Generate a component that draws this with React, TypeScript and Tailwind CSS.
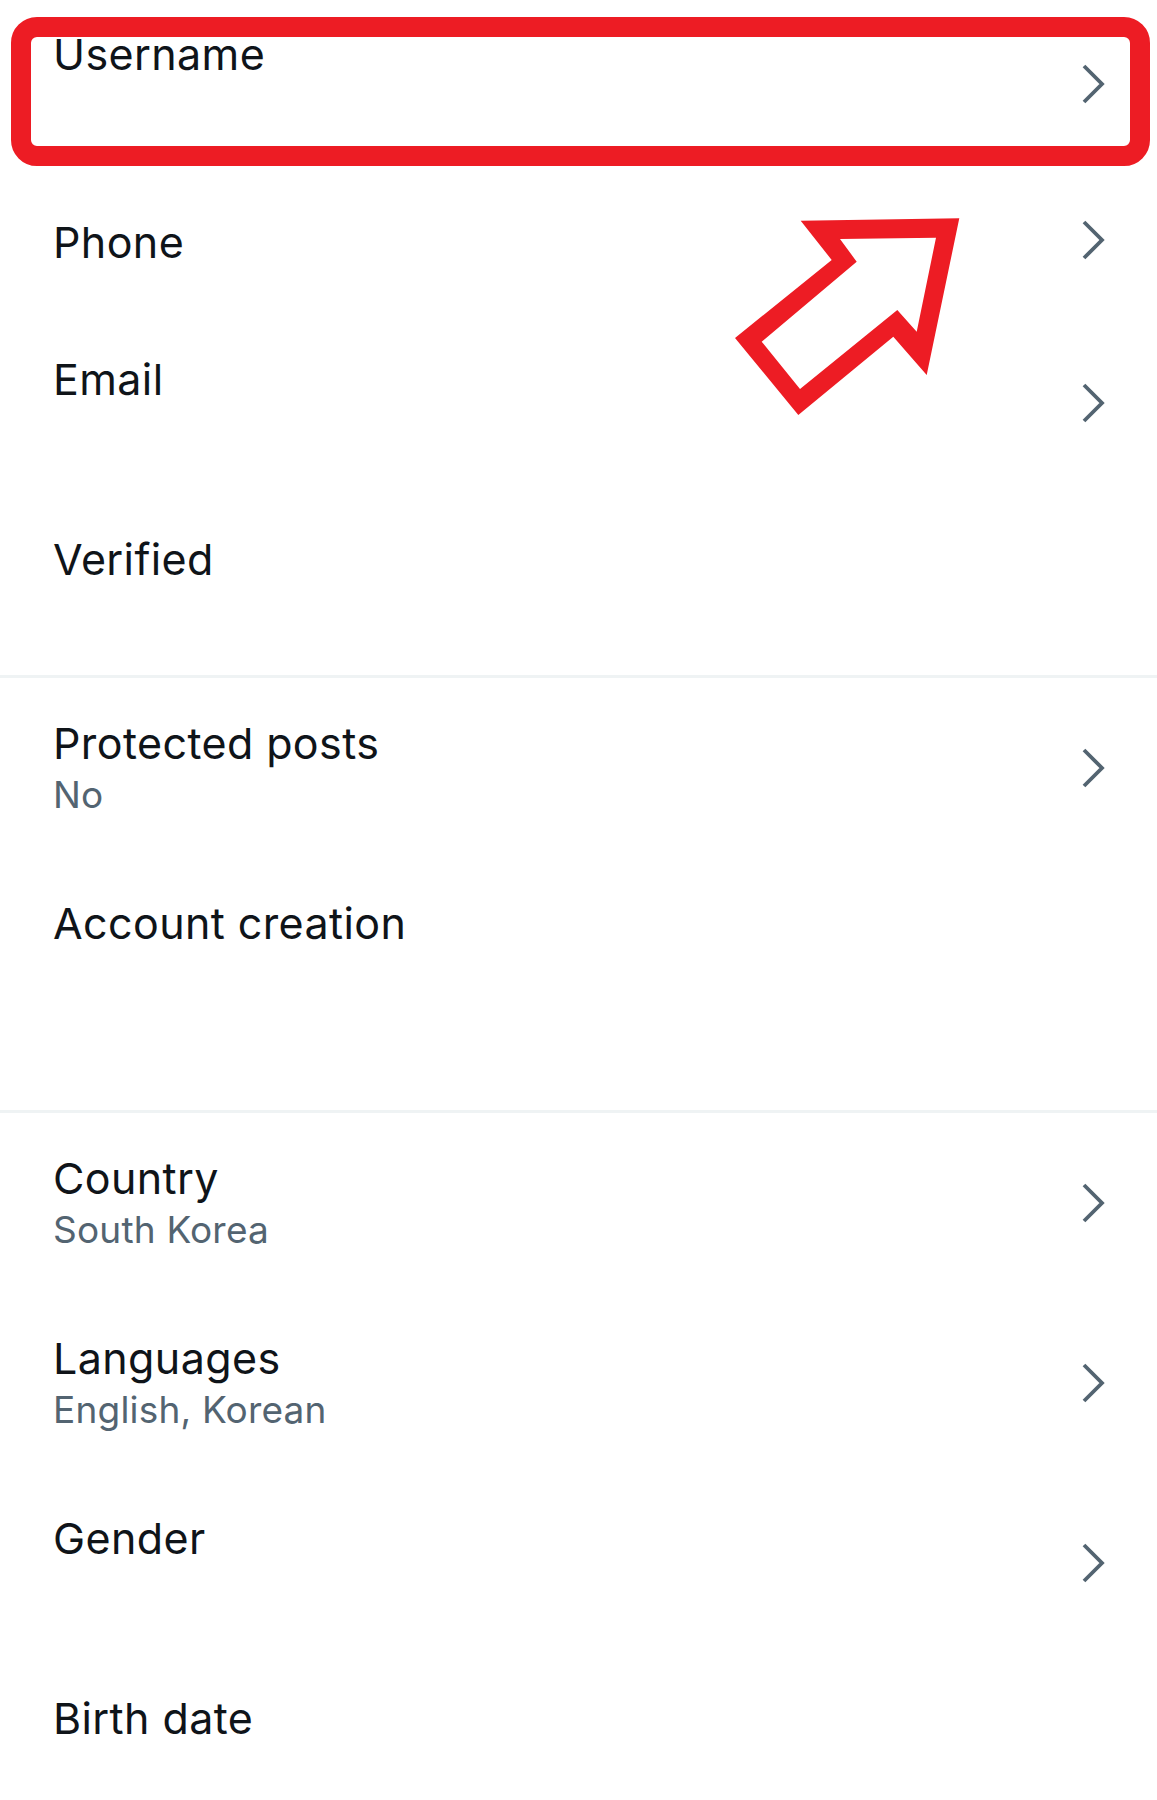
import React from "react";

const FONT = { fontFamily: "Inter, Roboto, 'Noto Sans', sans-serif" };

function Chevron() {
  return (
    <svg width="26" height="42" viewBox="0 0 26 42" className="shrink-0">
      <polyline
        points="4,3 22,21 4,39"
        fill="none"
        stroke="#536471"
        strokeWidth="3.8"
        strokeLinejoin="miter"
        strokeLinecap="butt"
      />
    </svg>
  );
}

type RowProps = {
  title: string;
  sub?: string;
  subLines?: number;
  chevron?: boolean;
  heightClass: string;
  ptClass: string;
};

function Row({ title, sub, subLines = 0, chevron = true, heightClass, ptClass }: RowProps) {
  return (
    <div className={`flex items-center justify-between pl-[53px] pr-[51px] ${heightClass}`}>
      <div className={`flex flex-col self-stretch ${ptClass}`}>
        <div className="text-[43px] leading-[56px] tracking-[0.4px] text-[#0f1419] whitespace-nowrap">{title}</div>
        {sub !== undefined && (
          <div className="text-[37px] leading-[48px] tracking-[0.2px] text-[#536471] whitespace-nowrap">{sub}</div>
        )}
        {Array.from({ length: subLines }).map((_, i) => (
          <div key={i} className="h-[48px]" />
        ))}
      </div>
      {chevron && <Chevron />}
    </div>
  );
}

function Divider() {
  return <div className="h-[3px] bg-[#eff3f4]" />;
}

export default function App() {
  return (
    <div className="relative w-[1157px] h-[1800px] overflow-hidden bg-white" style={FONT}>
      <div className="flex flex-col">
        <Row title="Username" subLines={1} heightClass="h-[167px]" ptClass="pt-[26px]" />
        <Row title="Phone" heightClass="h-[146px]" ptClass="pt-[47px]" />
        <Row title="Email" subLines={1} heightClass="h-[180px]" ptClass="pt-[38px]" />
        <Row title="Verified" subLines={1} chevron={false} heightClass="h-[182px]" ptClass="pt-[38px]" />
        <Divider />
        <Row title="Protected posts" sub="No" heightClass="h-[180px]" ptClass="pt-[37px]" />
        <Row title="Account creation" subLines={2} chevron={false} heightClass="h-[252px]" ptClass="pt-[37px]" />
        <Divider />
        <Row title="Country" sub="South Korea" heightClass="h-[180px]" ptClass="pt-[37px]" />
        <Row title="Languages" sub="English, Korean" heightClass="h-[180px]" ptClass="pt-[37px]" />
        <Row title="Gender" subLines={1} heightClass="h-[180px]" ptClass="pt-[37px]" />
        <Row title="Birth date" subLines={1} chevron={false} heightClass="h-[180px]" ptClass="pt-[37px]" />
      </div>

      {/* Red highlight box annotation */}
      <div className="absolute left-[11px] top-[17px] w-[1139px] h-[149px] rounded-[26px] border-[20px] border-[#ed1c24] pointer-events-none" />

      {/* Red outlined arrow annotation */}
      <svg
        className="absolute left-[700px] top-[200px] pointer-events-none"
        width="300"
        height="230"
        viewBox="0 0 300 230"
      >
        <path
          fillRule="evenodd"
          fill="#ed1c24"
          d="M100.7 20.7 L259.3 18.3 L226.7 175 L193.3 136.7 L98.3 215 L35 138 L131.7 60 Z M140 39 L156.7 61.7 L61.7 141.7 L100 189 L197.3 110 L216.7 131.7 L236 37.7 Z"
        />
      </svg>
    </div>
  );
}
